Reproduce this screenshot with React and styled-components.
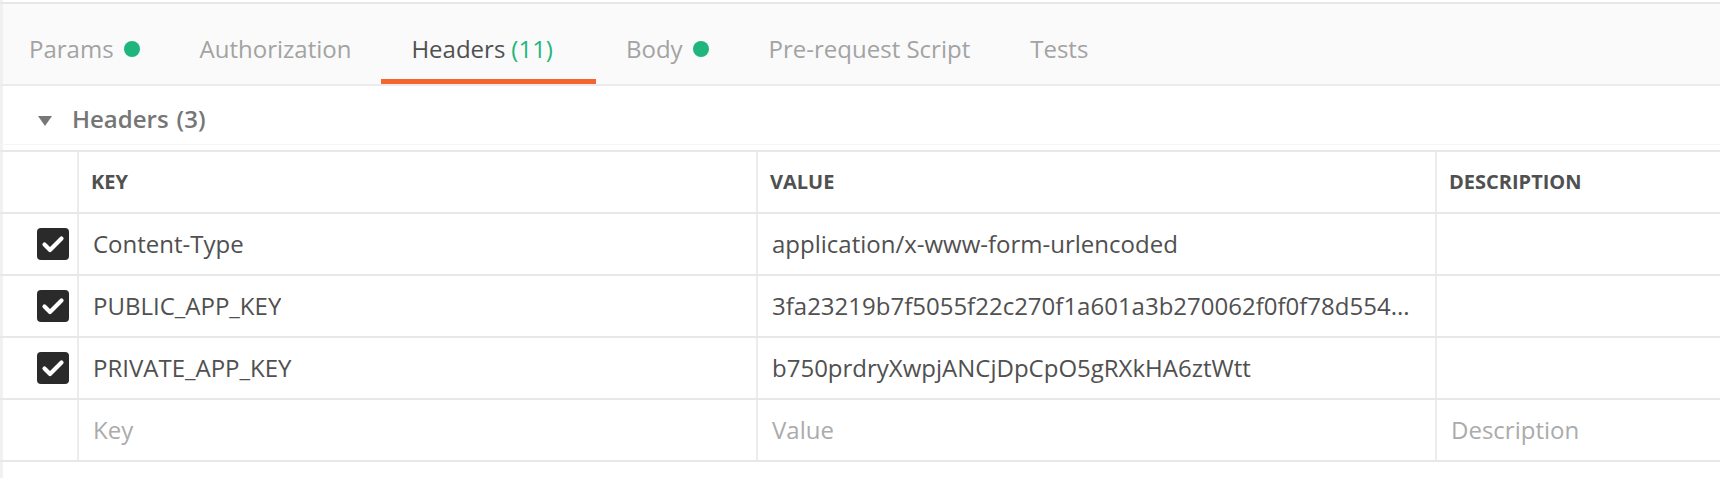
import React from 'react';
import styled, { createGlobalStyle } from 'styled-components';

const GlobalStyle = createGlobalStyle`
  html, body {
    margin: 0;
    padding: 0;
    background: #ffffff;
  }
  body {
    font-family: "Open Sans", "Liberation Sans", sans-serif;
    color: #505050;
  }
`;

const Page = styled.div`
  padding-top: 2px;
  min-height: 476px;
  box-shadow: inset 3px 0 0 #f1f1f1;
`;

const TabBar = styled.nav`
  display: flex;
  height: 80px;
  background: #fafafa;
  border-top: 2px solid #e8e8e8;
  border-bottom: 2px solid #ebebeb;
  box-shadow: inset 3px 0 0 #f0f0f0;
`;

const Tab = styled.div`
  box-sizing: border-box;
  height: 80px;
  display: flex;
  align-items: flex-start;
  padding: 28px 30px 0;
  margin-left: ${(p) => (p.first ? '-1px' : '0')};
  font-size: 24px;
  line-height: 33px;
  color: ${(p) => (p.active ? '#505050' : '#a3a3a3')};
  border-bottom: 5px solid ${(p) => (p.active ? '#f4652f' : 'transparent')};
  white-space: nowrap;
`;

const Dot = styled.span`
  width: 16px;
  height: 16px;
  border-radius: 50%;
  background: #1fb57c;
  margin: 9px 0 0 10px;
`;

const Count = styled.span`
  color: #1fb57c;
  margin: 0 13px 0 6px;
`;

const Section = styled.div`
  display: flex;
  align-items: flex-start;
  height: 59px;
  padding-top: 16px;
  box-sizing: border-box;
  border-bottom: 1px solid #f5f5f5;
  margin-bottom: 5px;
  font-size: 24px;
  line-height: 33px;
  font-weight: 600;
  color: #767676;
`;

const Caret = styled.span`
  width: 0;
  height: 0;
  border-left: 7.5px solid transparent;
  border-right: 7.5px solid transparent;
  border-top: 10px solid #777777;
  margin: 14px 20px 0 38px;
`;

const SectionCount = styled.span`
  margin-left: 8px;
`;

const Table = styled.div`
  border-top: 2px solid #e8e8e8;
`;

const Row = styled.div`
  display: grid;
  grid-template-columns: 79px 679px 679px 1fr;
  height: 62px;
  box-sizing: border-box;
  border-bottom: 2px solid #e8e8e8;
`;

const Cell = styled.div`
  box-sizing: border-box;
  display: flex;
  align-items: center;
  min-width: 0;
  padding-left: ${(p) => (p.head ? '12px' : '14px')};
  padding-right: 16px;
  border-right: ${(p) => (p.last ? 'none' : '2px solid #ececec')};
  font-size: ${(p) => (p.head ? '20px' : '24px')};
  font-weight: ${(p) => (p.head ? 700 : 400)};
  line-height: 32px;
  color: ${(p) => (p.placeholder ? '#ababab' : '#505050')};
`;

const CheckCell = styled.div`
  box-sizing: border-box;
  display: flex;
  align-items: center;
  justify-content: flex-end;
  padding-right: 8px;
  border-right: 2px solid #ececec;
  box-shadow: inset 3px 0 0 #f1f1f1;
`;

const Box = styled.span`
  display: flex;
  width: 32px;
  height: 32px;
  border-radius: 4px;
  background: #2a2a2a;
  margin-top: -1px;
`;

const Text = styled.span`
  overflow: hidden;
  white-space: nowrap;
  text-overflow: ellipsis;
`;

const Checkbox = () => (
  <Box>
    <svg width="32" height="32" viewBox="0 0 32 32">
      <path d="M7.5 16.5 L13 22 L24.5 10.5" fill="none" stroke="#ffffff" strokeWidth="4.2" strokeLinecap="round" strokeLinejoin="round" />
    </svg>
  </Box>
);

const tabs = [
  { label: 'Params', dot: true },
  { label: 'Authorization' },
  { label: 'Headers', count: '(11)', active: true },
  { label: 'Body', dot: true },
  { label: 'Pre-request Script' },
  { label: 'Tests' },
];

const headers = [
  { key: 'Content-Type', value: 'application/x-www-form-urlencoded' },
  { key: 'PUBLIC_APP_KEY', value: '3fa23219b7f5055f22c270f1a601a3b270062f0f0f78d554...' },
  { key: 'PRIVATE_APP_KEY', value: 'b750prdryXwpjANCjDpCpO5gRXkHA6ztWtt' },
];

const App = () => (
  <Page>
    <GlobalStyle />
    <TabBar>
      {tabs.map((t, i) => (
        <Tab key={t.label} active={t.active} first={i === 0}>
          {t.label}
          {t.count && <Count>{t.count}</Count>}
          {t.dot && <Dot />}
        </Tab>
      ))}
    </TabBar>
    <Section>
      <Caret />
      Headers<SectionCount>(3)</SectionCount>
    </Section>
    <Table>
      <Row>
        <CheckCell />
        <Cell head>KEY</Cell>
        <Cell head>VALUE</Cell>
        <Cell head last>DESCRIPTION</Cell>
      </Row>
      {headers.map((h) => (
        <Row key={h.key}>
          <CheckCell><Checkbox /></CheckCell>
          <Cell><Text>{h.key}</Text></Cell>
          <Cell><Text>{h.value}</Text></Cell>
          <Cell last />
        </Row>
      ))}
      <Row>
        <CheckCell />
        <Cell placeholder>Key</Cell>
        <Cell placeholder>Value</Cell>
        <Cell placeholder last>Description</Cell>
      </Row>
    </Table>
  </Page>
);

export default App;
